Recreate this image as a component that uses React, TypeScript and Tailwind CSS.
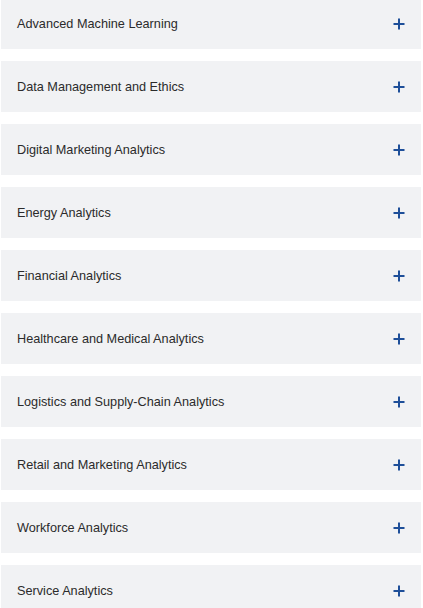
const items = [
  'Advanced Machine Learning',
  'Data Management and Ethics',
  'Digital Marketing Analytics',
  'Energy Analytics',
  'Financial Analytics',
  'Healthcare and Medical Analytics',
  'Logistics and Supply-Chain Analytics',
  'Retail and Marketing Analytics',
  'Workforce Analytics',
  'Service Analytics',
]

const Plus = () => (
  <svg width="12" height="12" viewBox="0 0 12 12" className="shrink-0">
    <path d="M6 0.5v11M0.5 6h11" stroke="#1e4f99" strokeWidth="2" />
  </svg>
)

export default function App() {
  return (
    <div className="-mt-[2px] flex w-[423px] flex-col gap-[12px] bg-white px-[1px] font-['Liberation_Sans',Arial,sans-serif]">
      {items.map((item) => (
        <button
          key={item}
          className="flex h-[51px] w-[420px] items-center justify-between bg-[#f1f2f4] pl-[16px] pr-[16px] text-left"
        >
          <span className="pt-[2px] text-[12.7px] text-[#2b2b2b]">{item}</span>
          <Plus />
        </button>
      ))}
    </div>
  )
}
